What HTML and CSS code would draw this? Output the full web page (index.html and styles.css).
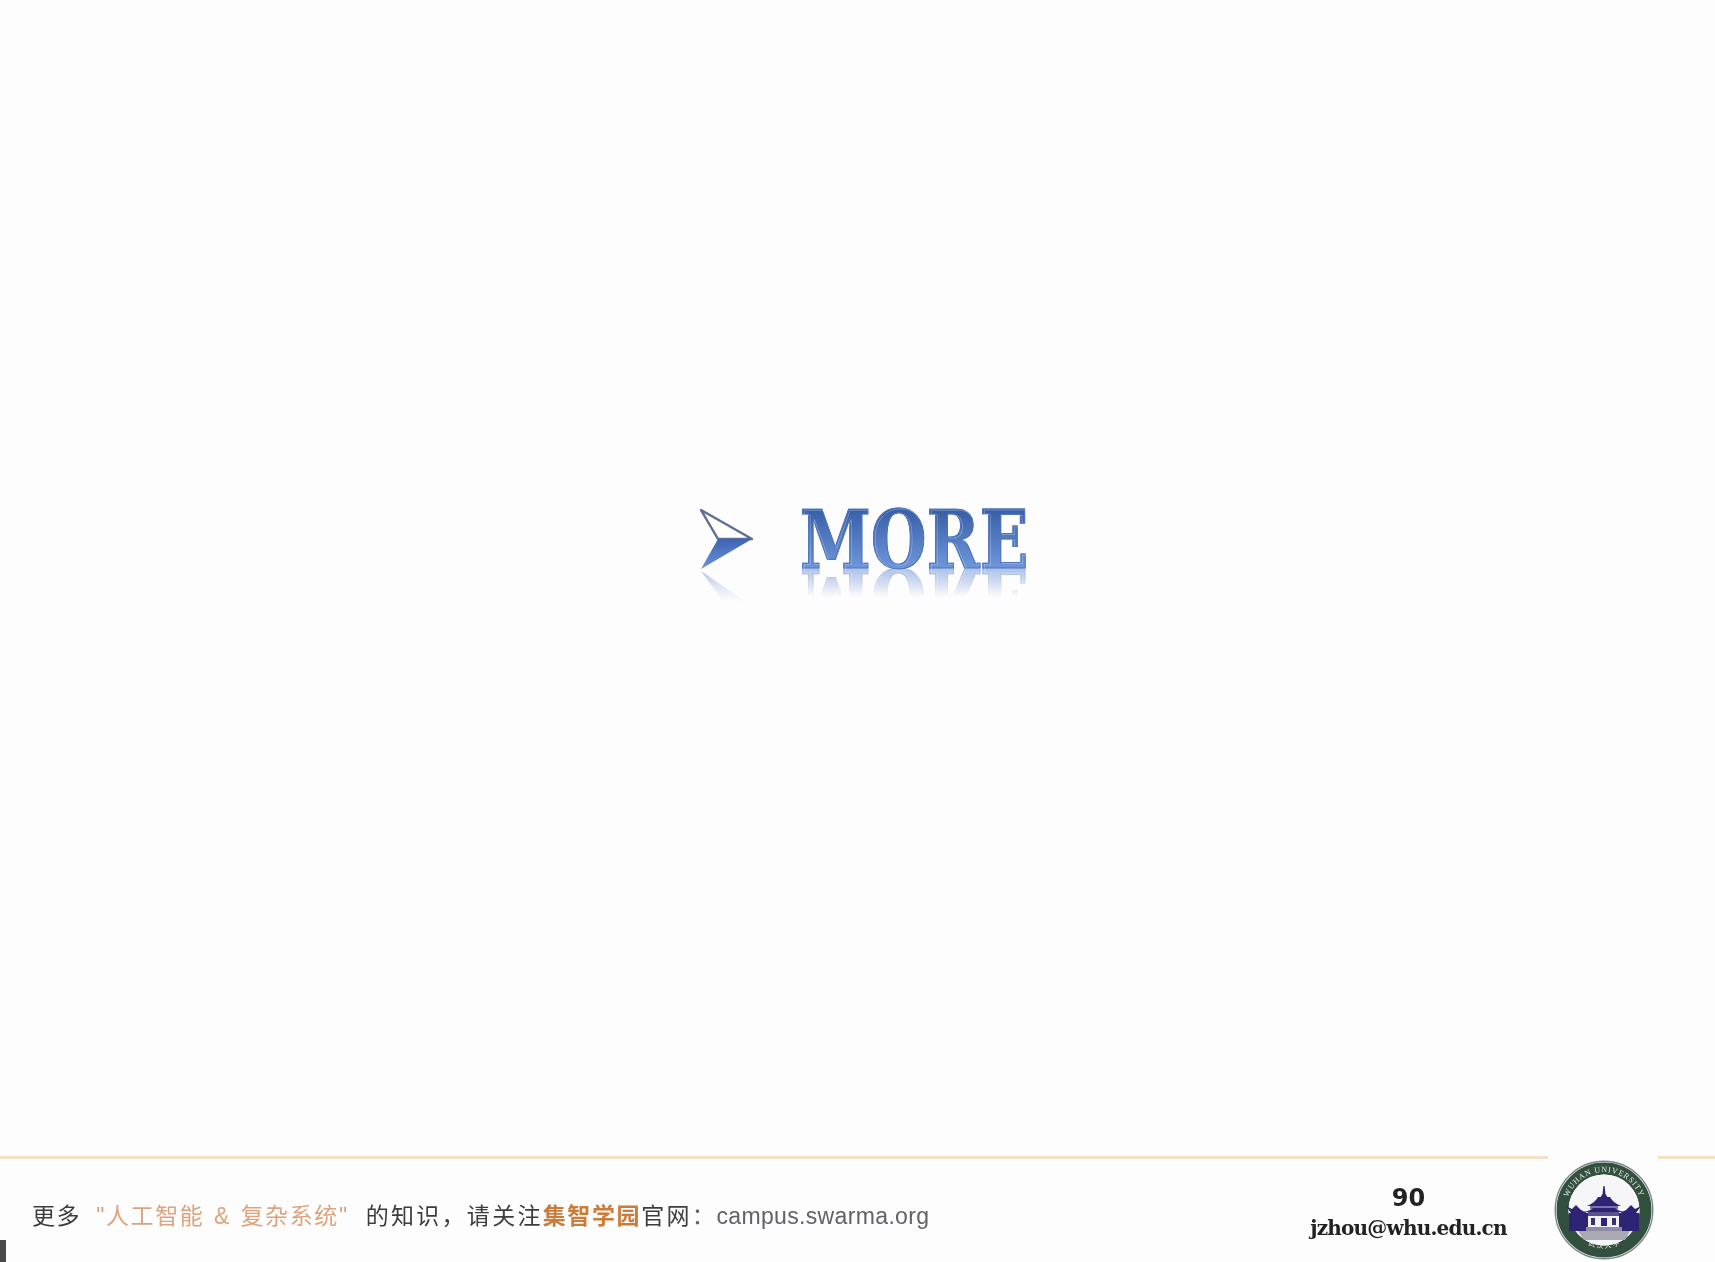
FILE: index.html
```html
<!DOCTYPE html>
<html lang="zh">
<head>
<meta charset="utf-8">
<title>MORE</title>
<link rel="stylesheet" href="styles.css">
</head>
<body>
<div class="slide">
  <main class="stage">
    <div class="heading">
      <svg class="arrow" width="54" height="100" viewBox="0 0 54 100" aria-hidden="true">
        <defs>
          <linearGradient id="fade" x1="0" y1="0" x2="0" y2="1">
            <stop offset="0" stop-color="#8fa3d4" stop-opacity=".7"/>
            <stop offset="1" stop-color="#c3cfe9" stop-opacity="0"/>
          </linearGradient>
          <linearGradient id="fill" x1="0" y1="0" x2="0" y2="1">
            <stop offset="0" stop-color="#3c65b4"/>
            <stop offset="1" stop-color="#6c92d8"/>
          </linearGradient>
        </defs>
        <path d="M1 1 L52 30 L18 30 Z" fill="#fff" stroke="#5f6f92" stroke-width="2.4" stroke-linejoin="round"/>
        <path d="M18 30 L52 30 L1 60 Z" fill="url(#fill)"/>
        <path d="M1 62 L46 93 L22 91 Z" fill="url(#fade)"/>
      </svg>
      <h1 class="title" data-text="MORE">MORE</h1>
    </div>
  </main>
  <footer class="footer">
    <div class="rule">
      <span class="rule-left"></span>
      <span class="rule-right"></span>
    </div>
    <div class="footer-row">
      <p class="promo"><span class="lead">更多</span><span class="accent-soft">"人工智能 &amp; 复杂系统"</span><span class="plain">的知识，请关注</span><span class="accent-strong">集智学园</span><span class="plain">官网</span><span class="colon">：</span><span class="url">campus.swarma.org</span></p>
      <div class="contact">
        <div class="page-no">90</div>
        <div class="email">jzhou@whu.edu.cn</div>
      </div>
      <svg class="logo" width="100" height="100" viewBox="0 0 100 100" aria-label="Wuhan University seal">
        <defs>
          <path id="ring-top" d="M12 50 A38 38 0 0 1 88 50"/>
          <path id="ring-bottom" d="M20 74 A39 39 0 0 0 80 74"/>
        </defs>
        <circle cx="50" cy="50" r="48.8" fill="#fff" stroke="#7a8785" stroke-width="1.4"/>
        <circle cx="50" cy="50" r="41.5" fill="none" stroke="#33503f" stroke-width="12"/>
        <text class="ring-text"><textPath href="#ring-top" startOffset="50%" text-anchor="middle">WUHAN UNIVERSITY</textPath></text>
        <text class="ring-cn"><textPath href="#ring-bottom" startOffset="50%" text-anchor="middle">武 汉 大 学</textPath></text>
        <circle cx="50" cy="50" r="35.5" fill="#f6f6f8"/>
        <path d="M49.4 26 H50.6 L51.5 34 L54 38 H46 L48.5 34 Z" fill="#2e2475"/>
        <path d="M33 46 C38 44 42 41 44 37 H56 C58 41 62 44 67 46 Z" fill="#2e2475"/>
        <rect x="36" y="46" width="28" height="3" fill="#7a72a8"/>
        <path d="M29 52 C34 51 37 50 39 48 H61 C63 50 66 51 71 52 Z" fill="#2e2475"/>
        <path d="M12 46 L18 49 L22 45 L27 50 L33 53 H17 Z" fill="#2e2475"/>
        <path d="M87 46 L81 49 L77 45 L72 50 L66 53 H82 Z" fill="#2e2475"/>
        <rect x="15" y="53" width="19" height="18" fill="#2e2475"/>
        <rect x="65" y="53" width="20" height="18" fill="#2e2475"/>
        <rect x="34" y="52" width="31" height="4" fill="#5b5192"/>
        <rect x="34" y="56" width="31" height="11" fill="#f2f1f6"/>
        <rect x="37" y="58" width="4" height="7" fill="#3a3268"/>
        <rect x="47" y="58" width="6" height="8" fill="#2e2475"/>
        <rect x="58" y="58" width="4" height="7" fill="#3a3268"/>
        <rect x="32" y="67" width="36" height="4" fill="#8f8ca8"/>
        <path d="M24 71 H76 L71 80 H30 Z" fill="#a9a9b3"/>
      </svg>
    </div>
  </footer>
  <span class="corner-mark"></span>
</div>
</body>
</html>
```
FILE: styles.css
```css
* {
  box-sizing: border-box;
}

html,
body {
  margin: 0;
  height: 100%;
  background: #fdfdfe;
}

.slide {
  position: relative;
  width: 1715px;
  height: 1262px;
  overflow: hidden;
  display: flex;
  flex-direction: column;
  background: #fdfdfe;
}

.stage {
  flex: 1;
  padding: 509px 0 0 700px;
}

.heading {
  display: flex;
  align-items: flex-start;
  gap: 46px;
  filter: blur(0.6px);
}

.arrow {
  flex: none;
}

.title {
  position: relative;
  margin: -9px 0 0;
  width: 282px;
  font-family: "DejaVu Serif", serif;
  font-size: 80px;
  line-height: 80px;
  font-weight: 700;
  white-space: nowrap;
  color: #4d74bd;
  background: linear-gradient(180deg, #3a61a8 14%, #7097dc 86%);
  -webkit-background-clip: text;
  background-clip: text;
  -webkit-text-fill-color: transparent;
  -webkit-text-stroke: 1.2px #4d74bd;
  transform: scaleX(0.8);
  transform-origin: left top;
  -webkit-box-reflect: below -23px linear-gradient(transparent 50%, rgba(255, 255, 255, 0.55) 85%);
}

.title::after {
  content: attr(data-text);
  position: absolute;
  left: 2px;
  top: 1px;
  -webkit-text-stroke: 0.7px rgba(255, 255, 255, 0.35);
}

.footer {
  flex: none;
  height: 106px;
  display: flex;
  flex-direction: column;
}

.rule {
  flex: none;
  display: flex;
  justify-content: space-between;
  height: 3px;
  filter: blur(0.5px);
}

.rule-left {
  width: 1548px;
  background: #f4e0c3;
}

.rule-right {
  width: 57px;
  background: #f4e0c3;
}

.footer-row {
  flex: 1;
  display: flex;
  align-items: flex-start;
  padding-left: 32px;
  filter: blur(0.6px);
}

.promo {
  margin: 41px 0 0;
  width: 1278px;
  font-family: "Liberation Sans", "Noto Sans CJK SC", sans-serif;
  font-size: 23px;
  line-height: 28px;
  letter-spacing: 1.6px;
  color: #3d3d3f;
  white-space: nowrap;
}

.lead {
  margin-right: 15px;
}

.accent-soft {
  margin-right: 17px;
  word-spacing: 1.6px;
  color: #dca47c;
}

.accent-strong {
  color: #cb7b3a;
  font-weight: 700;
}

.plain {
  letter-spacing: 2.3px;
}

.colon {
  font-family: "Noto Sans CJK TC", sans-serif;
  color: #606268;
}

.url {
  color: #606268;
  letter-spacing: 0.35px;
}

.contact {
  width: 197px;
  margin-top: 25px;
  text-align: center;
  color: #222;
}

.page-no {
  font-family: "DejaVu Sans", sans-serif;
  font-size: 24px;
  line-height: 28px;
  font-weight: 700;
}

.email {
  margin-top: 2px;
  font-family: "DejaVu Serif", serif;
  font-size: 20px;
  line-height: 28px;
  font-weight: 700;
  letter-spacing: -0.8px;
  white-space: nowrap;
}

.logo {
  flex: none;
  margin: 1px 0 0 47px;
}

.ring-text {
  font-family: "Liberation Serif", serif;
  font-size: 8px;
  letter-spacing: 0.8px;
  fill: #e3e8e4;
}

.ring-cn {
  font-family: "Noto Sans CJK SC", sans-serif;
  font-size: 7px;
  fill: #e3e8e4;
}

.corner-mark {
  position: absolute;
  left: 0;
  bottom: 0;
  width: 6px;
  height: 22px;
  background: #4a4a4c;
}
```
